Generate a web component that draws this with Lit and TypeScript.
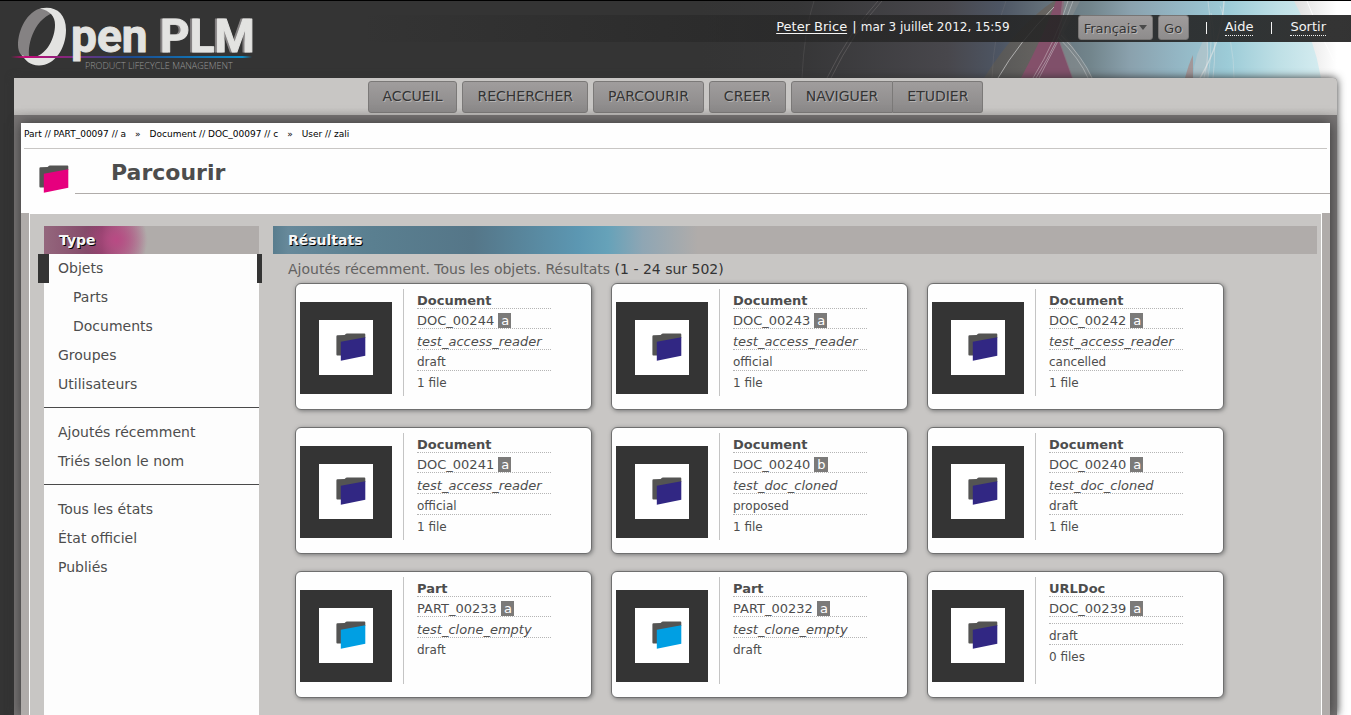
import { LitElement, html, svg, css, nothing } from "lit";
import { customElement, property } from "lit/decorators.js";
import { classMap } from "lit/directives/class-map.js";

type Kind = "Document" | "Part" | "URLDoc";

interface Item {
  kind: Kind;
  reference: string;
  revision: string;
  name: string;
  state: string;
  files?: string;
}

const ITEMS: Item[] = [
  { kind: "Document", reference: "DOC_00244", revision: "a", name: "test_access_reader", state: "draft", files: "1 file" },
  { kind: "Document", reference: "DOC_00243", revision: "a", name: "test_access_reader", state: "official", files: "1 file" },
  { kind: "Document", reference: "DOC_00242", revision: "a", name: "test_access_reader", state: "cancelled", files: "1 file" },
  { kind: "Document", reference: "DOC_00241", revision: "a", name: "test_access_reader", state: "official", files: "1 file" },
  { kind: "Document", reference: "DOC_00240", revision: "b", name: "test_doc_cloned", state: "proposed", files: "1 file" },
  { kind: "Document", reference: "DOC_00240", revision: "a", name: "test_doc_cloned", state: "draft", files: "1 file" },
  { kind: "Part", reference: "PART_00233", revision: "a", name: "test_clone_empty", state: "draft" },
  { kind: "Part", reference: "PART_00232", revision: "a", name: "test_clone_empty", state: "draft" },
  { kind: "URLDoc", reference: "DOC_00239", revision: "a", name: "", state: "draft", files: "0 files" },
];

@customElement("plm-folder")
class PlmFolder extends LitElement {
  @property() tone = "document";

  static styles = css`
    :host { display: block; width: 30px; height: 29px; }
    svg { display: block; }
    .back { fill: #545453; }
    .browse { fill: #e6007e; }
    .document { fill: #312783; }
    .part { fill: #009fe3; }
  `;

  render() {
    return html`<svg width="30" height="29" viewBox="0 0 30 29" aria-hidden="true">
      <path class="back" d="M0.4 3.4Q0.4 2.4 1.4 2.3L8.6 1.9L10 0.7Q10.4 0.4 11 0.4H28.4Q29.3 0.4 29.3 1.4V5L5 10V22.6H1.3Q0.4 22.6 0.4 21.6Z" />
      <path class=${this.tone} d="M4.8 8.8L29.3 4.2V22.8L4.8 27.8Z" />
    </svg>`;
  }
}

@customElement("plm-card")
class PlmCard extends LitElement {
  @property({ attribute: false }) item!: Item;

  static styles = css`
    :host {
      display: flex;
      box-sizing: border-box;
      width: 297px;
      height: 127px;
      padding: 5px 4px 13px;
      border: 1px solid #6f6f6f;
      border-radius: 6px;
      background: #fefefe;
      box-shadow: 1px 1px 4px #777;
      color: #4d4d4d;
    }
    .thumb {
      display: flex;
      align-items: center;
      justify-content: flex-end;
      box-sizing: border-box;
      width: 92px;
      height: 92px;
      margin-top: 13px;
      padding-right: 7px;
      border: solid #343434;
      border-width: 18px 19px 19px;
      background: #fff;
    }
    dl {
      box-sizing: border-box;
      margin: 0 0 0 11px;
      padding-left: 13px;
      border-left: 1px solid #c4c4c4;
      width: 148px;
      font-size: 13px;
    }
    div { white-space: nowrap; }
    .row { border-bottom: 1px dotted #b5b5b5; min-height: 6px; }
    .row:last-child { border-bottom: 0; }
    dt, dd { margin: 0; }
    dt { font-weight: bold; padding-top: 4px; line-height: 15px; }
    .ref { padding-top: 5px; line-height: 14px; }
    .rev { background: #7b7a79; color: #fff; padding: 0 2px 0 3px; }
    .name { font-style: italic; padding-top: 5px; line-height: 15px; }
    .small { font-size: 12px; padding-top: 4px; line-height: 16px; }
  `;

  render() {
    const i = this.item;
    return html`
      <div class="thumb"><plm-folder tone=${i.kind === "Part" ? "part" : "document"}></plm-folder></div>
      <dl>
        <div class="row"><dt>${i.kind}</dt></div>
        <div class="row"><dd class="ref">${i.reference} <span class="rev">${i.revision}</span></dd></div>
        <div class="row">${i.name ? html`<dd class="name">${i.name}</dd>` : nothing}</div>
        <div class="row"><dd class="small">${i.state}</dd></div>
        ${i.files ? html`<div class="row"><dd class="small">${i.files}</dd></div>` : nothing}
      </dl>
    `;
  }
}

@customElement("plm-header")
class PlmHeader extends LitElement {
  static styles = css`
    :host {
      display: flex;
      position: relative;
      height: 77px;
      border-top: 1px solid #000;
      background: #343434;
      color: #f4f4f4;
      font-size: 13px;
      overflow: hidden;
    }
    .art { position: absolute; right: 0; top: 0; }
    .logo { position: relative; flex: none; margin-left: 10px; }
    .bar {
      position: relative;
      flex: 1;
      display: flex;
      align-items: center;
      justify-content: flex-end;
      height: 27px;
      margin-top: 14px;
      margin-left: 90px;
      padding-right: 25px;
      background: linear-gradient(90deg, rgba(36, 36, 36, 0), rgba(36, 36, 36, 0.86) 60%, rgba(36, 36, 36, 0.93));
      white-space: nowrap;
    }
    .user { margin: 0 67px 0 0; line-height: 22px; padding-bottom: 4px; }
    .user a { color: inherit; text-underline-offset: 2px; }
    .user time { font-size: 12px; }
    .user a, .user time { margin-right: 1px; }
    .lang { display: flex; gap: 5px; padding-bottom: 2px; margin-right: 17px; }
    .pick { position: relative; }
    .arrow {
      position: absolute;
      right: 6px;
      top: 10px;
      border: 4px solid transparent;
      border-top: 5px solid #4a4a4a;
      border-bottom: 0;
      pointer-events: none;
    }
    select, button {
      appearance: none;
      box-sizing: border-box;
      height: 25px;
      margin: 0;
      padding: 2px 5px 0;
      border: 1px solid #777574;
      border-radius: 3px;
      background: linear-gradient(#9f9c9c, #8e8c8c);
      color: #343434;
      font: 13px "DejaVu Sans", sans-serif;
      text-shadow: 1px 1px 0 #b8b6b6;
    }
    select { width: 75px; }
    button { width: 31px; }
    .sep { width: 1px; height: 12px; background: #f4f4f4; margin-bottom: 2px; }
    .link {
      margin: 0 18px 3px;
      color: inherit;
      text-decoration: none;
      border-bottom: 1px dotted #f4f4f4;
      line-height: 16px;
    }
    .link:last-child { margin-right: 0; }
    .word { font: bold 46px Roboto, sans-serif; fill: #e3e3e1; stroke: #e3e3e1; stroke-width: 1; stroke-linejoin: round; }
    .deep { filter: drop-shadow(-2px 0 0 #858283); }
    .tag { font: 300 9px "Open Sans", sans-serif; fill: #989898; }
  `;

  private art() {
    return svg`
      <defs>
        <linearGradient id="sky" x1="0" x2="1" y1="0" y2="0">
          <stop offset="0" stop-color="#343434" />
          <stop offset="0.15" stop-color="#363637" />
          <stop offset="0.38" stop-color="#48474c" />
          <stop offset="0.46" stop-color="#4d5563" />
          <stop offset="0.52" stop-color="#606c76" />
          <stop offset="0.6" stop-color="#72858c" />
          <stop offset="0.66" stop-color="#8aa1ad" />
          <stop offset="0.73" stop-color="#93b5c3" />
          <stop offset="0.81" stop-color="#9ccbd7" />
          <stop offset="0.89" stop-color="#bfe0e6" />
          <stop offset="1" stop-color="#e4f5f8" />
        </linearGradient>
        <linearGradient id="edge" x1="0" x2="1" y1="0" y2="0">
          <stop offset="0" stop-color="#dedede" />
          <stop offset="0.75" stop-color="#fff" />
        </linearGradient>
        <linearGradient id="veil" x1="0" x2="1" y1="0" y2="0">
          <stop offset="0" stop-color="#555" />
          <stop offset="1" stop-color="#6b6864" />
        </linearGradient>
      </defs>
      <rect width="651" height="77" fill="url(#sky)" />
      <path d="M284 77Q310 36 338 12Q346 5 354 0H362L350 34L322 77Z" fill="url(#veil)" />
      <path d="M321 77Q344 34 356 0H364L361 34L334 77Z" fill="#84506a" />
      <path d="M333 77L359 38L373 77Z" fill="#80506a" />
      <path d="M358 38L372 77H393L364 32L380 0H362Z" fill="#8d9090" opacity="0.5" />
      <path d="M485 77Q489 62 493 54V77Z" fill="#a58d8c" opacity="0.8" />
      <path d="M493 77Q494 52 508 32V77Z" fill="#b5c4cb" opacity="0.7" />
      <path d="M594 0Q614 36 621 77H651V0Z" fill="url(#edge)" />
      <g fill="none" stroke="#e8e8e8">
        <path d="M298 77Q318 42 354 6" opacity="0.6" />
        <path d="M333 77Q356 40 368 0M336 77Q359 40 373 0M339 77L358 40" opacity="0.4" />
        <path d="M358 36Q380 58 388 77M361 34Q384 58 392 77" opacity="0.4" />
        <path d="M500 77Q522 40 524 0" opacity="0.6" stroke-width="1.4" />
        <path d="M508 0Q514 40 508 77M511 12Q517 45 513 77M505 30Q511 50 504 77" opacity="0.4" />
        <path d="M534 77Q534 40 520 5" opacity="0.3" />
        <path d="M607 0Q618 30 634 60" stroke="#fff" opacity="0.8" />
        <path d="M127 77Q150 30 178 0M131 77Q154 30 182 0" stroke="#8c8788" opacity="0.35" />
        <path d="M102 77Q104 30 114 0M292 77Q294 30 306 0" stroke="#8c8788" opacity="0.2" />
      </g>
    `;
  }

  render() {
    return html`
      <svg class="art" width="651" height="77" viewBox="0 0 651 77" aria-hidden="true">${this.art()}</svg>
      <svg class="logo" width="260" height="77" viewBox="10 1 260 77" role="img" aria-label="OpenPLM">
        <defs>
          <linearGradient id="line" gradientUnits="userSpaceOnUse" x1="11" x2="252" y1="0" y2="0">
            <stop offset="0" stop-color="#e6007e" stop-opacity="0" />
            <stop offset="0.06" stop-color="#c20a78" />
            <stop offset="0.28" stop-color="#73307f" />
            <stop offset="0.5" stop-color="#1a4c92" />
            <stop offset="0.96" stop-color="#0d8fcc" />
            <stop offset="1" stop-color="#0d8fcc" stop-opacity="0" />
          </linearGradient>
        </defs>
        <path fill="#858283" d="M42 8C27 11 18 30 18 45C18 53 22 58 30 60C26 48 33 20 53 13Z" />
        <path fill="#e3e3e1" d="M40 8.500C54 5 66 12 66 30C66 48 55 65.500 39 65.500C30 65.500 25 60 22 55C26 57.500 31 58 35 57C47 54 55 38 55 25C55 16 50 11 40 8.500Z" />
        <rect x="11" y="56" width="241" height="2" fill="url(#line)" />
        <text class="word" x="71" y="52">pen</text>
        <text class="word deep" x="160" y="52">PLM</text>
        <text class="tag" x="85" y="69">PRODUCT LIFECYCLE MANAGEMENT</text>
      </svg>
      <div class="bar">
        <p class="user"><a href="#user">Peter Brice</a> | <time>mar 3 juillet 2012, 15:59</time></p>
        <form class="lang" @submit=${(e: Event) => e.preventDefault()}>
          <span class="pick">
            <select aria-label="Langue"><option>Français</option></select>
            <span class="arrow"></span>
          </span>
          <button type="submit">Go</button>
        </form>
        <span class="sep"></span>
        <a class="link" href="#aide">Aide</a>
        <span class="sep"></span>
        <a class="link" href="#sortir">Sortir</a>
      </div>
    `;
  }
}

@customElement("app-root")
class AppRoot extends LitElement {
  static styles = css`
    :host {
      display: flex;
      flex-direction: column;
      height: 100vh;
      overflow: hidden;
      background: linear-gradient(90deg, #343434 50%, #fff 95%);
      font-family: "DejaVu Sans", sans-serif;
      font-size: 14px;
      color: #4d4d4d;
    }
    a { color: inherit; text-decoration: none; }
    plm-header { flex: none; }
    .frame {
      position: relative;
      flex: 1;
      display: flex;
      flex-direction: column;
      margin: 0 14px;
      background: #777474;
      border-radius: 0 4px 0 0;
      box-shadow: 0 0 9px #343434;
    }
    nav.menu {
      display: flex;
      justify-content: center;
      gap: 5px;
      box-sizing: border-box;
      padding: 3px 0 2px;
      height: 37px;
      background: linear-gradient(#c8c6c4 80%, #b9b7b5);
      border-radius: 0 4px 0 0;
    }
    .menu a {
      box-sizing: border-box;
      height: 32px;
      padding: 0 14px;
      border: 1px solid #7b7978;
      border-radius: 3px;
      background: linear-gradient(#a09d9d, #8b8989);
      color: #343434;
      line-height: 29px;
      text-shadow: 1px 1px 0 #b5b3b3;
    }
    .pair { display: flex; }
    .pair a:first-child { border-radius: 3px 0 0 3px; }
    .pair a:last-child { border-radius: 0 3px 3px 0; border-left: 0; }
    .sheet {
      flex: 1;
      display: flex;
      flex-direction: column;
      margin: 8px 7px 0;
      background: #fefefe;
      box-shadow: 0 0 12px #343434;
    }
    .trail {
      display: flex;
      gap: 9px;
      margin: 0 3px;
      height: 25px;
      border-bottom: 1px solid #c8c6c4;
      font-size: 9px;
      line-height: 23px;
      color: #000;
    }
    .title { display: flex; height: 64px; }
    .title plm-folder { margin: 16px 6px 0 18px; }
    h1 {
      flex: 1;
      box-sizing: border-box;
      height: 45px;
      margin: 0;
      padding-left: 36px;
      border-bottom: 1px solid #b0acaa;
      font-size: 22px;
      line-height: 48px;
      color: #4d4d4d;
    }
    .panel {
      flex: 1;
      display: flex;
      align-items: stretch;
      gap: 14px;
      border: solid #b0acaa;
      border-width: 0 8px;
      background: #c8c6c4;
      box-shadow: inset 1px 1px #fff, inset -1px 0 #fff;
      padding: 13px 5px 0 15px;
    }
    h2 {
      margin: 0;
      padding-left: 15px;
      height: 28px;
      font-size: 14px;
      line-height: 28px;
      color: #f6f6f6;
      text-shadow: 1px 1px 0 #000;
      background-color: #b0acaa;
    }
    .side { flex: none; width: 215px; background: #fdfdfd; }
    .side h2 {
      background-image: radial-gradient(ellipse 32px 30px at 72px 14px, #b94a84, rgba(185, 74, 132, 0)),
        linear-gradient(90deg, #94677d, #88506e 35px, #7f3f63 58px, #a4738a 78px, #b0acaa 102px);
    }
    ul { list-style: none; margin: 0; padding: 0 0 8px; }
    ul + ul { border-top: 1px solid #4a4a4a; padding: 10px 0 8px; }
    li { position: relative; padding-left: 14px; line-height: 29px; height: 29px; }
    .sub { padding-left: 29px; }
    .current::before, .current::after {
      content: "";
      position: absolute;
      top: 0;
      height: 29px;
      background: #343434;
    }
    .current::before { left: -6px; width: 11px; }
    .current::after { right: -3px; width: 5px; }
    .results { flex: 1; }
    .results h2 {
      background-image: linear-gradient(90deg, #597d8e, #67899a 15px, #5a7f90 100px, #557688 200px,
        #5c97b2 305px, #66a2b9 335px, #8fa6b4 370px, #b0acaa 425px);
    }
    .summary { margin: 0; padding: 2px 0 0 15px; line-height: 27px; color: #636261; }
    .summary strong { font-weight: normal; color: #343434; }
    .cards { display: flex; flex-wrap: wrap; gap: 17px 19px; padding: 0 80px 0 22px; }
  `;

  private links(labels: string[], current = "", subs: string[] = []) {
    return html`<ul>
      ${labels.map(
        (l) => html`<li class=${classMap({ current: l === current, sub: subs.includes(l) })}><a href="#">${l}</a></li>`
      )}
    </ul>`;
  }

  render() {
    return html`
      <plm-header></plm-header>
      <div class="frame">
        <nav class="menu">
          <a href="#">ACCUEIL</a>
          <a href="#">RECHERCHER</a>
          <a href="#">PARCOURIR</a>
          <a href="#">CREER</a>
          <span class="pair"><a href="#">NAVIGUER</a><a href="#">ETUDIER</a></span>
        </nav>
        <div class="sheet">
          <nav class="trail">
            <a href="#">Part // PART_00097 // a</a><span>»</span>
            <a href="#">Document // DOC_00097 // c</a><span>»</span>
            <a href="#">User // zali</a>
          </nav>
          <div class="title">
            <plm-folder tone="browse"></plm-folder>
            <h1>Parcourir</h1>
          </div>
          <div class="panel">
            <aside class="side">
              <h2>Type</h2>
              ${this.links(["Objets", "Parts", "Documents", "Groupes", "Utilisateurs"], "Objets", ["Parts", "Documents"])}
              ${this.links(["Ajoutés récemment", "Triés selon le nom"])}
              ${this.links(["Tous les états", "État officiel", "Publiés"])}
            </aside>
            <main class="results">
              <h2>Résultats</h2>
              <p class="summary">Ajoutés récemment. Tous les objets. Résultats <strong>(1 - 24 sur 502)</strong></p>
              <div class="cards">${ITEMS.map((i) => html`<plm-card .item=${i}></plm-card>`)}</div>
            </main>
          </div>
        </div>
      </div>
    `;
  }
}
